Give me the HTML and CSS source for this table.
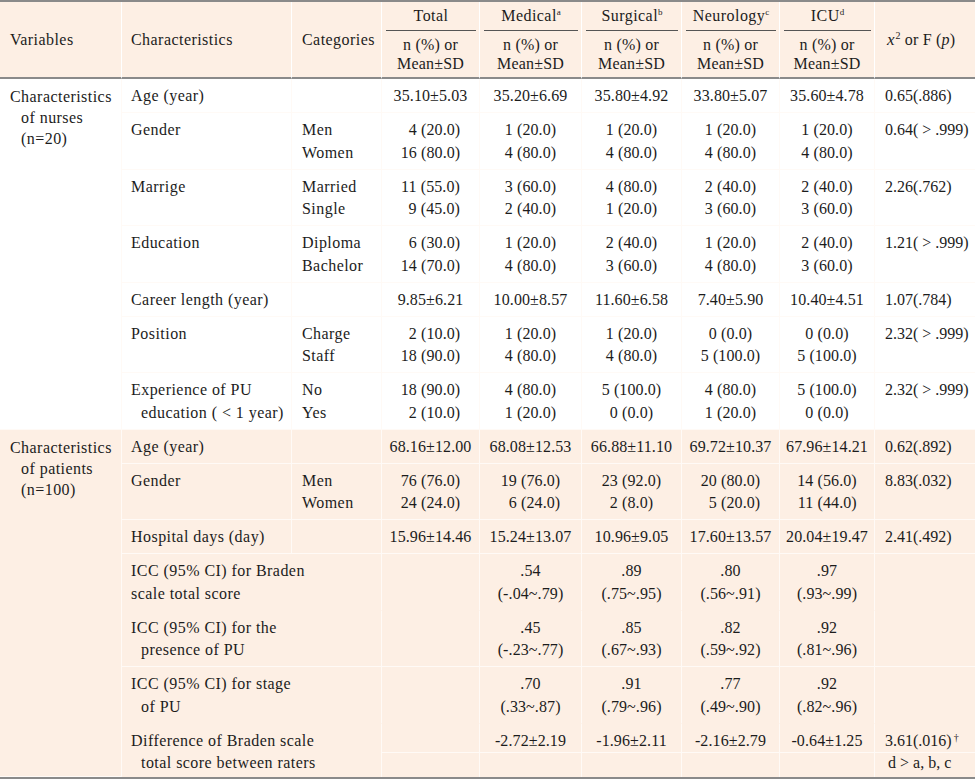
FILE: index.html
```html
<!DOCTYPE html>
<html lang="en">
<head>
<meta charset="utf-8">
<title>Characteristics of nurses and patients</title>
<link rel="stylesheet" href="styles.css">
</head>
<body>
<table class="tbl">
  <colgroup>
    <col class="w-var"><col class="w-char"><col class="w-cat"><col class="w-tot">
    <col class="w-med"><col class="w-sur"><col class="w-neu"><col class="w-icu"><col class="w-stat">
  </colgroup>
  <thead>
    <tr>
      <th rowspan="2" class="hl hv">Variables</th>
      <th rowspan="2" class="hl hc">Characteristics</th>
      <th rowspan="2" class="hl">Categories</th>
      <th class="grp"><div>Total</div></th>
      <th class="grp"><div>Medical<sup>a</sup></div></th>
      <th class="grp"><div>Surgical<sup>b</sup></div></th>
      <th class="grp"><div>Neurology<sup>c</sup></div></th>
      <th class="grp"><div>ICU<sup>d</sup></div></th>
      <th rowspan="2" class="hl hs"><i class="chi">x</i><sup class="sq">2</sup> or F (<i>p</i>)</th>
    </tr>
    <tr>
      <th class="sub">n (%) or<br>Mean±SD</th>
      <th class="sub">n (%) or<br>Mean±SD</th>
      <th class="sub">n (%) or<br>Mean±SD</th>
      <th class="sub">n (%) or<br>Mean±SD</th>
      <th class="sub">n (%) or<br>Mean±SD</th>
    </tr>
  </thead>
  <tbody class="nurses">
    <tr>
      <td rowspan="7" class="group">Characteristics<br>of nurses<br>(n=20)</td>
      <td class="lab">Age (year)</td><td class="cat"></td>
      <td class="v">35.10±5.03</td><td class="v">35.20±6.69</td><td class="v">35.80±4.92</td><td class="v">33.80±5.07</td><td class="v">35.60±4.78</td>
      <td class="s">0.65(.886)</td>
    </tr>
    <tr>
      <td class="lab">Gender</td><td class="cat">Men<br>Women</td>
      <td class="v"><span class="st">4 (20.0)<br>16 (80.0)</span></td>
      <td class="v"><span class="st">1 (20.0)<br>4 (80.0)</span></td>
      <td class="v"><span class="st">1 (20.0)<br>4 (80.0)</span></td>
      <td class="v"><span class="st">1 (20.0)<br>4 (80.0)</span></td>
      <td class="v"><span class="st">1 (20.0)<br>4 (80.0)</span></td>
      <td class="s">0.64( &gt; .999)</td>
    </tr>
    <tr>
      <td class="lab">Marrige</td><td class="cat">Married<br>Single</td>
      <td class="v"><span class="st">11 (55.0)<br>9 (45.0)</span></td>
      <td class="v"><span class="st">3 (60.0)<br>2 (40.0)</span></td>
      <td class="v"><span class="st">4 (80.0)<br>1 (20.0)</span></td>
      <td class="v"><span class="st">2 (40.0)<br>3 (60.0)</span></td>
      <td class="v"><span class="st">2 (40.0)<br>3 (60.0)</span></td>
      <td class="s">2.26(.762)</td>
    </tr>
    <tr>
      <td class="lab">Education</td><td class="cat">Diploma<br>Bachelor</td>
      <td class="v"><span class="st">6 (30.0)<br>14 (70.0)</span></td>
      <td class="v"><span class="st">1 (20.0)<br>4 (80.0)</span></td>
      <td class="v"><span class="st">2 (40.0)<br>3 (60.0)</span></td>
      <td class="v"><span class="st">1 (20.0)<br>4 (80.0)</span></td>
      <td class="v"><span class="st">2 (40.0)<br>3 (60.0)</span></td>
      <td class="s">1.21( &gt; .999)</td>
    </tr>
    <tr>
      <td class="lab">Career length (year)</td><td class="cat"></td>
      <td class="v">9.85±6.21</td><td class="v">10.00±8.57</td><td class="v">11.60±6.58</td><td class="v">7.40±5.90</td><td class="v">10.40±4.51</td>
      <td class="s">1.07(.784)</td>
    </tr>
    <tr>
      <td class="lab">Position</td><td class="cat">Charge<br>Staff</td>
      <td class="v"><span class="st">2 (10.0)<br>18 (90.0)</span></td>
      <td class="v"><span class="st">1 (20.0)<br>4 (80.0)</span></td>
      <td class="v"><span class="st">1 (20.0)<br>4 (80.0)</span></td>
      <td class="v"><span class="sc">0 (0.0)<br>5 (100.0)</span></td>
      <td class="v"><span class="sc">0 (0.0)<br>5 (100.0)</span></td>
      <td class="s">2.32( &gt; .999)</td>
    </tr>
    <tr>
      <td class="lab hang">Experience of PU<br>education ( &lt; 1 year)</td><td class="cat">No<br>Yes</td>
      <td class="v"><span class="st">18 (90.0)<br>2 (10.0)</span></td>
      <td class="v"><span class="st">4 (80.0)<br>1 (20.0)</span></td>
      <td class="v"><span class="sc">5 (100.0)<br>0 (0.0)</span></td>
      <td class="v"><span class="st">4 (80.0)<br>1 (20.0)</span></td>
      <td class="v"><span class="sc">5 (100.0)<br>0 (0.0)</span></td>
      <td class="s">2.32( &gt; .999)</td>
    </tr>
  </tbody>
  <tbody class="patients">
    <tr>
      <td rowspan="7" class="group">Characteristics<br>of patients<br>(n=100)</td>
      <td class="lab">Age (year)</td><td class="cat"></td>
      <td class="v">68.16±12.00</td><td class="v">68.08±12.53</td><td class="v">66.88±11.10</td><td class="v">69.72±10.37</td><td class="v">67.96±14.21</td>
      <td class="s">0.62(.892)</td>
    </tr>
    <tr>
      <td class="lab">Gender</td><td class="cat">Men<br>Women</td>
      <td class="v"><span class="st">76 (76.0)<br>24 (24.0)</span></td>
      <td class="v"><span class="st">19 (76.0)<br>6 (24.0)</span></td>
      <td class="v"><span class="sc">23 (92.0)<br>2 (8.0)</span></td>
      <td class="v"><span class="st">20 (80.0)<br>5 (20.0)</span></td>
      <td class="v"><span class="st">14 (56.0)<br>11 (44.0)</span></td>
      <td class="s">8.83(.032)</td>
    </tr>
    <tr>
      <td class="lab">Hospital days (day)</td><td class="cat"></td>
      <td class="v">15.96±14.46</td><td class="v">15.24±13.07</td><td class="v">10.96±9.05</td><td class="v">17.60±13.57</td><td class="v">20.04±19.47</td>
      <td class="s">2.41(.492)</td>
    </tr>
    <tr class="joined">
      <td class="lab" colspan="2">ICC (95% CI) for Braden<br>scale total score</td>
      <td class="v"></td>
      <td class="v">.54<br>(-.04~.79)</td>
      <td class="v">.89<br>(.75~.95)</td>
      <td class="v">.80<br>(.56~.91)</td>
      <td class="v">.97<br>(.93~.99)</td>
      <td class="s"></td>
    </tr>
    <tr>
      <td class="lab hang" colspan="2">ICC (95% CI) for the<br>presence of PU</td>
      <td class="v"></td>
      <td class="v">.45<br>(-.23~.77)</td>
      <td class="v">.85<br>(.67~.93)</td>
      <td class="v">.82<br>(.59~.92)</td>
      <td class="v">.92<br>(.81~.96)</td>
      <td class="s"></td>
    </tr>
    <tr class="joined">
      <td class="lab hang" colspan="2">ICC (95% CI) for stage<br>of PU</td>
      <td class="v"></td>
      <td class="v">.70<br>(.33~.87)</td>
      <td class="v">.91<br>(.79~.96)</td>
      <td class="v">.77<br>(.49~.90)</td>
      <td class="v">.92<br>(.82~.96)</td>
      <td class="s"></td>
    </tr>
    <tr class="last">
      <td class="lab hang" colspan="2">Difference of Braden scale<br>total score between raters</td>
      <td class="v split"></td>
      <td class="v split">-2.72±2.19</td>
      <td class="v split">-1.96±2.11</td>
      <td class="v split">-2.16±2.79</td>
      <td class="v split">-0.64±1.25</td>
      <td class="s split">3.61(.016)<sup class="dag">†</sup><br><span class="post">d &gt; a, b, c</span></td>
    </tr>
  </tbody>
</table>
</body>
</html>
```

FILE: styles.css
```css
* { box-sizing: border-box; }

body {
  margin: 0;
  background: #ffffff;
  font-family: "Liberation Serif", "Times New Roman", serif;
  font-size: 16px;
  color: #1c1c1c;
  letter-spacing: 0.45px;
}

.tbl {
  width: 975px;
  table-layout: fixed;
  border-collapse: separate;
  border-spacing: 0;
  border-top: 2px solid #8a8a8a;
  border-bottom: 2px solid #8a8a8a;
}

.w-var { width: 122px; }
.w-char { width: 170px; }
.w-cat { width: 90px; }
.w-tot { width: 98px; }
.w-med { width: 102px; }
.w-sur { width: 100px; }
.w-neu { width: 98px; }
.w-icu { width: 95px; }
.w-stat { width: 100px; }

thead { background: #fdefe4; }

th {
  font-weight: normal;
  line-height: 19px;
  vertical-align: middle;
  border-right: 1px solid #ffffff;
  border-bottom: 2px solid #8a8a8a;
  white-space: nowrap;
}

th.hl { text-align: left; padding: 0 4px 0 10px; }
th.hc { padding-left: 9px; }
th.hs { padding-left: 12px; border-right: none; letter-spacing: 0.2px; }

th.grp {
  text-align: center;
  border-bottom: none;
  padding: 4px 0 0;
}

th.grp div {
  margin: 0 3px 0 4px;
  padding-bottom: 5px;
  border-bottom: 1px solid #555555;
}

th.sub {
  text-align: center;
  padding: 4px 0;
  letter-spacing: 0.2px;
}

sup {
  font-size: 9px;
  line-height: 0;
  vertical-align: 6px;
  letter-spacing: 0;
}

sup.sq { font-size: 10px; margin-left: 1px; }
.chi { font-size: 17px; letter-spacing: 0; }

tbody.patients { background: #fdefe4; }

td {
  vertical-align: top;
  line-height: 22.5px;
  padding: 6px 4px 4.5px 0;
  border-right: 1px solid #fffaf6;
  border-bottom: 1px solid #fffaf6;
  white-space: nowrap;
}

td.group {
  line-height: 21px;
  padding-left: 21px;
  text-indent: -11px;
  padding-top: 7px;
}

td.lab { padding-left: 9px; }
td.lab.hang { padding-left: 19px; text-indent: -10px; }
td.cat { padding-left: 10px; }

td.v {
  text-align: center;
  padding-left: 2px;
  padding-right: 2px;
  letter-spacing: 0.1px;
}

.st {
  display: inline-block;
  text-align: right;
  text-indent: 0;
}

.sc {
  display: inline-block;
  text-align: center;
}

td.s {
  padding-left: 10px;
  border-right: none;
  letter-spacing: 0;
}

tr.joined td { border-bottom-color: transparent; }
tr.joined td.group { border-bottom-color: #fffaf6; }

td.split {
  background-image: linear-gradient(to bottom, transparent 28px, #fffaf6 28px, #fffaf6 29px, transparent 29px);
}

.dag { font-size: 10px; margin-left: 2px; vertical-align: 5px; }
.post { padding-left: 3px; }

tr.last td { padding-bottom: 2px; border-bottom: none; }
```
